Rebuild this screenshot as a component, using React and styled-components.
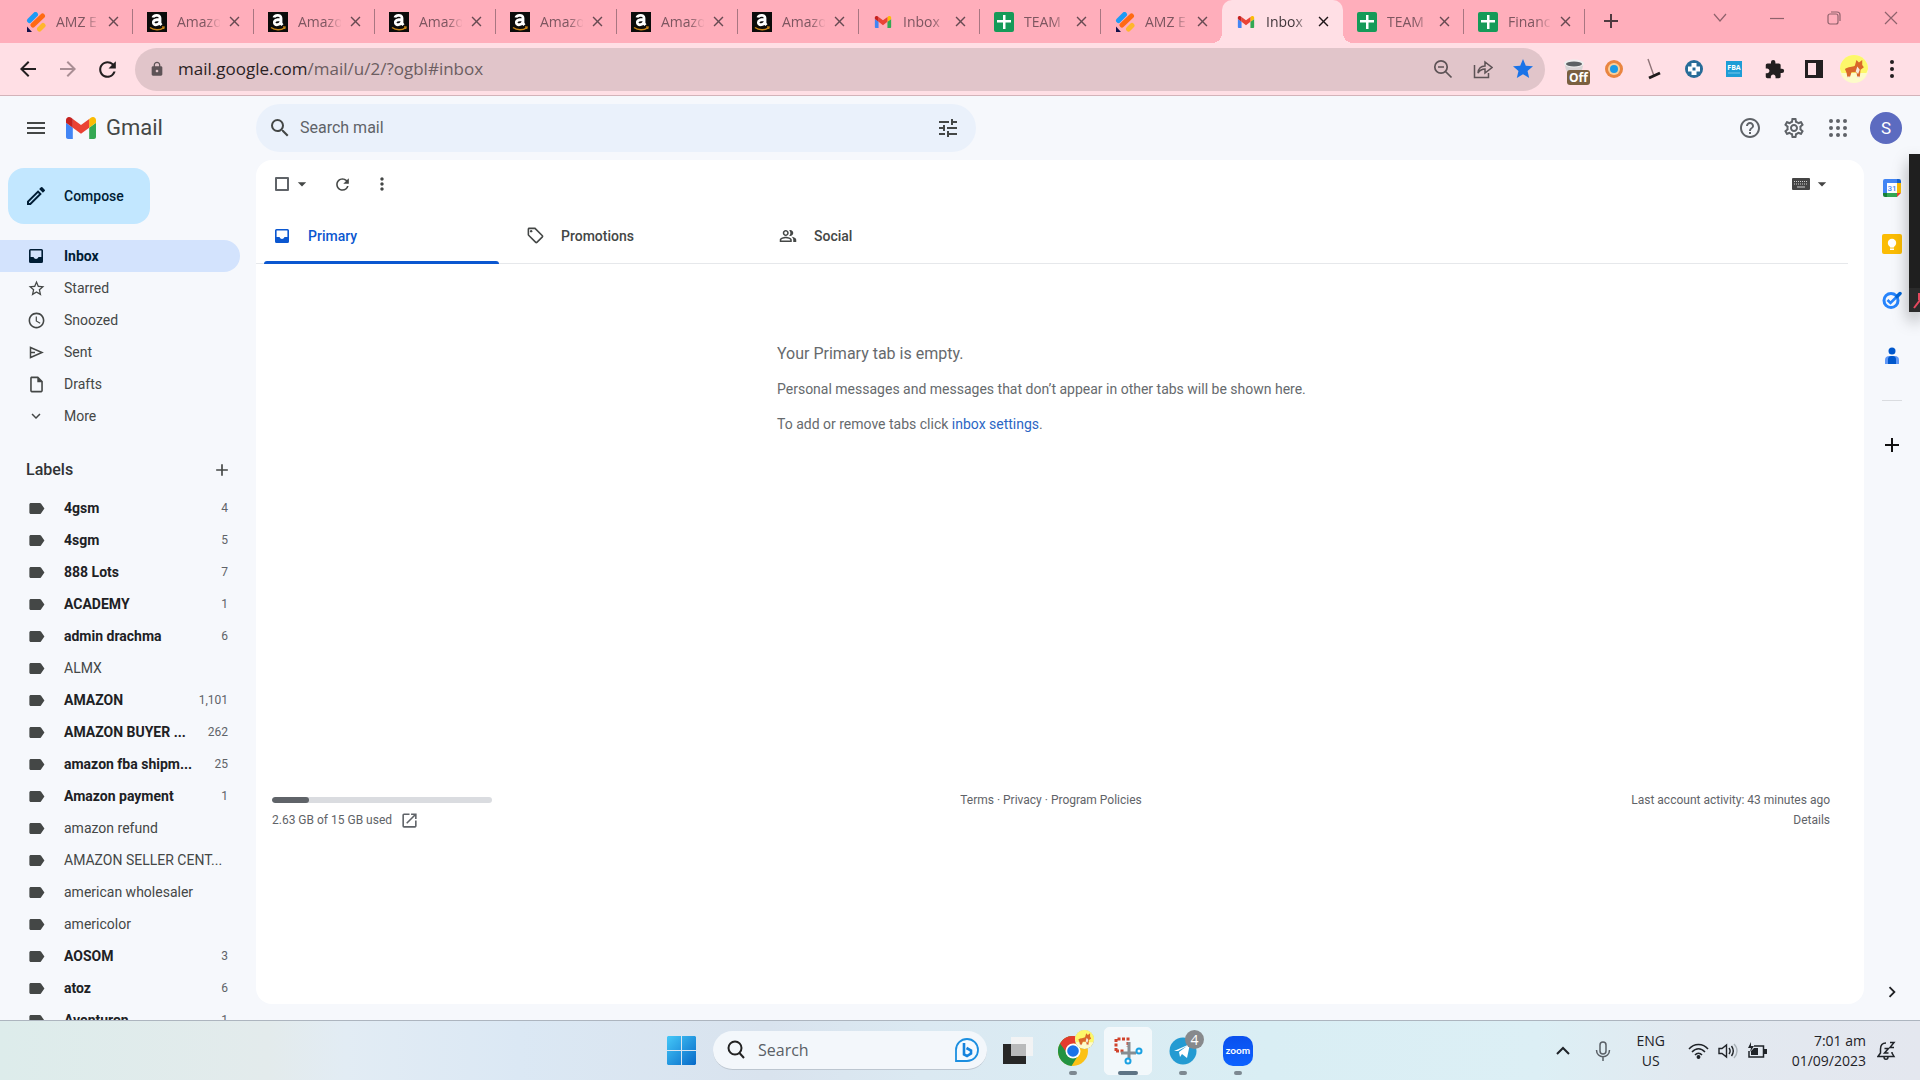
import React from "react";
import styled, { createGlobalStyle, css } from "styled-components";
import {
  MdStarBorder, MdAccessTime, MdOutlineInsertDriveFile, MdOutlinePeopleAlt,
  MdExpandMore, MdLabel, MdAdd, MdMenu, MdSearch, MdTune, MdHelpOutline,
  MdOutlineSettings, MdRefresh, MdMoreVert, MdArrowDropDown,
  MdOutlineLocalOffer, MdOpenInNew, MdLock, MdStar,
  MdExtension, MdArrowBack, MdArrowForward, MdOutlineModeEdit, MdClose,
  MdChevronRight,
} from "react-icons/md";

const chromeFont = '"Open Sans", "Noto Sans", sans-serif';
const mailFont = 'Roboto, "Liberation Sans", sans-serif';

const GlobalStyle = createGlobalStyle`
  *, *::before, *::after { box-sizing: border-box; }
  body { margin: 0; font-family: ${mailFont}; color: #444746; overflow: hidden; }
  button, input { font: inherit; color: inherit; }
  a { color: inherit; text-decoration: none; }
  svg { display: block; flex: none; }
`;

const Screen = styled.div`
  height: 100vh;
  display: flex;
  flex-direction: column;
`;

const PlainButton = styled.button`
  display: flex;
  align-items: center;
  justify-content: center;
  flex: none;
  border: 0;
  padding: 0;
  background: none;
  width: ${(p) => p.$w || 24}px;
  height: ${(p) => p.$h || p.$w || 24}px;
  color: ${(p) => p.$color || "inherit"};
`;

/* ---------- browser ---------- */

const TabStrip = styled.div`
  display: flex;
  align-items: stretch;
  height: 43px;
  flex: none;
  padding-left: 12px;
  background: #ffaebb;
  font-family: ${chromeFont};
`;

const BrowserTab = styled.div`
  position: relative;
  display: flex;
  align-items: center;
  width: 121px;
  flex: 0 1 121px;
  padding-left: 14px;
  color: #7d5660;
  ${(p) => p.$active && css`
    background: #ffdfe5;
    border-radius: 10px 10px 0 0;
    color: #41363a;
    &::before, &::after {
      content: "";
      position: absolute;
      bottom: 0;
      width: 10px;
      height: 10px;
    }
    &::before { left: -10px; background: radial-gradient(circle at 0 0, #ffaebb 10px, #ffdfe5 10px); }
    &::after { right: -10px; background: radial-gradient(circle at 100% 0, #ffaebb 10px, #ffdfe5 10px); }
  `}
`;

const TabTitle = styled.span`
  width: 43px;
  margin-left: 10px;
  overflow: hidden;
  white-space: nowrap;
  font-size: 14px;
  line-height: 20px;
  mask-image: linear-gradient(90deg, #000 28px, transparent 44px);
`;

const TabClose = styled(PlainButton)`
  margin-left: 6px;
  width: 16px;
  color: ${(p) => (p.$active ? "#1f1518" : "#674a52")};
`;

const TabRule = styled.span`
  width: 1px;
  height: 25px;
  margin-left: auto;
  background: ${(p) => (p.$hidden ? "transparent" : "#a87681")};
`;

const NewTab = styled(PlainButton)`
  margin: 9px 0 0 14px;
  color: #4f3a40;
`;

const WindowControls = styled.div`
  display: flex;
  gap: 33px;
  margin: 6px 17px 0 auto;
  color: #8f626c;
`;

const AddressRow = styled.div`
  display: flex;
  align-items: center;
  flex: none;
  height: 53px;
  padding: 0 16px 0 14px;
  border-bottom: 1px solid #d3b3b9;
  background: #ffdfe5;
  color: #231f20;
  font-family: ${chromeFont};
`;

const NavButtons = styled.div`
  display: flex;
  gap: 13px;
  width: 121px;
  flex: none;
`;

const Omnibox = styled.div`
  display: flex;
  align-items: center;
  flex: 1;
  height: 43px;
  padding: 0 10px 0 14px;
  border-radius: 22px;
  background: #e1c5ca;
  color: #5d5356;
`;

const Address = styled.div`
  flex: 1;
  margin-left: 13px;
  font-size: 17px;
  line-height: 24px;
  color: #6b5d61;
  b { font-weight: 400; color: #2a2224; }
`;

const OmniActions = styled.div`
  display: flex;
  gap: 16px;
`;

const Extensions = styled.div`
  display: flex;
  align-items: center;
  gap: 12px;
  margin-left: 15px;
`;

const ExtSlot = styled(PlainButton)`
  position: relative;
  width: 28px;
  height: 34px;
`;

const OffBadge = styled.span`
  position: absolute;
  left: 7px;
  top: 18px;
  padding: 0 2px;
  border-radius: 3px;
  background: #7a6040;
  color: #fff;
  font-size: 12px;
  font-weight: 700;
  line-height: 15px;
`;

const ProfilePic = styled(PlainButton)`
  width: 28px;
  height: 34px;
`;

/* ---------- mail ---------- */

const Mail = styled.div`
  display: flex;
  flex-direction: column;
  flex: 1;
  min-height: 0;
  background: #f6f8fc;
  position: relative;
`;

const MailHeader = styled.header`
  display: flex;
  align-items: center;
  height: 64px;
  flex: none;
  padding-right: 18px;
`;

const Brand = styled.div`
  display: flex;
  align-items: center;
  width: 256px;
  flex: none;
  padding-left: 24px;
`;

const BrandLink = styled.a`
  display: flex;
  align-items: center;
  gap: 10px;
  margin-left: 18px;
  font-size: 22px;
  line-height: 28px;
  color: #444746;
`;

const SearchForm = styled.form`
  display: flex;
  align-items: center;
  width: 720px;
  height: 48px;
  padding: 0 16px 0 12px;
  border-radius: 24px;
  background: #eaf1fb;
  input {
    flex: 1;
    min-width: 0;
    margin-left: 8px;
    padding: 0;
    border: 0;
    background: none;
    outline: 0;
    font-size: 16px;
    line-height: 24px;
  }
  input::placeholder { color: #5f6368; opacity: 1; }
`;

const HeaderActions = styled.div`
  display: flex;
  align-items: center;
  gap: 20px;
  margin-left: auto;
  color: #5f6368;
`;

const Avatar = styled(PlainButton)`
  border-radius: 50%;
  background: #5c6bc0;
  color: #fff;
  font-size: 17px;
`;

const Body = styled.div`
  display: flex;
  flex: 1;
  min-height: 0;
`;

const Sidebar = styled.aside`
  width: 256px;
  flex: none;
  overflow: hidden;
  padding-top: 8px;
`;

const Compose = styled.button`
  display: flex;
  align-items: center;
  gap: 16px;
  width: 142px;
  height: 56px;
  margin: 0 0 16px 8px;
  padding: 0 0 0 16px;
  border: 0;
  border-radius: 16px;
  background: #c2e7ff;
  color: #001d35;
  font-size: 14px;
  font-weight: 500;
`;

const NavRow = styled.a`
  display: flex;
  align-items: center;
  height: 32px;
  width: 240px;
  padding: 0 12px 0 26px;
  border-radius: 0 16px 16px 0;
  font-size: 14px;
  line-height: 20px;
  color: ${(p) => (p.$active ? "#001d35" : p.$unread ? "#202124" : "#444746")};
  background: ${(p) => (p.$active ? "#d3e3fd" : "transparent")};
  font-weight: ${(p) => (p.$active || p.$unread ? 700 : 400)};
`;

const RowText = styled.span`
  flex: 1;
  margin-left: 18px;
  white-space: nowrap;
`;

const Count = styled.span`
  font-size: 12px;
  font-weight: 400;
  color: #5f6368;
`;

const LabelsHead = styled.div`
  display: flex;
  align-items: center;
  justify-content: space-between;
  width: 240px;
  height: 60px;
  margin: 8px 0 -8px;
  padding: 0 8px 0 26px;
  h2 {
    margin: 0;
    font-size: 16px;
    font-weight: 500;
    line-height: 20px;
    color: #303336;
  }
`;

const Card = styled.main`
  display: flex;
  flex-direction: column;
  flex: 1;
  min-width: 0;
  margin-bottom: 16px;
  border-radius: 16px;
  background: #fff;
`;

const Toolbar = styled.div`
  display: flex;
  align-items: center;
  height: 48px;
  flex: none;
  padding: 0 32px 0 19px;
`;

const Check = styled.input`
  appearance: none;
  width: 14px;
  height: 14px;
  margin: 0 8px 0 0;
  border: 2px solid #5f6368;
  border-radius: 1px;
`;

const SelectGroup = styled.div`
  display: flex;
  align-items: center;
  width: 59px;
`;

const InputTools = styled.div`
  display: flex;
  align-items: center;
  gap: 1px;
  margin-left: auto;
  color: #444;
`;

const CategoryTabs = styled.nav`
  display: flex;
  height: 56px;
  flex: none;
  margin-right: 16px;
  padding-left: 8px;
  border-bottom: 1px solid #e6e8eb;
`;

const Category = styled.a`
  position: relative;
  display: flex;
  align-items: center;
  gap: 16px;
  width: 253px;
  padding-left: 8px;
  font-size: 14px;
  font-weight: 500;
  color: ${(p) => (p.$active ? "#0b57d0" : "#444746")};
  ${(p) => p.$active && css`
    &::after {
      content: "";
      position: absolute;
      left: 0;
      right: 18px;
      bottom: -1px;
      height: 3px;
      border-radius: 3px 3px 0 0;
      background: #0b57d0;
    }
  `}
`;

const EmptyArea = styled.section`
  display: flex;
  justify-content: center;
  flex: none;
  padding: 78px 16px 0 0;
`;

const EmptyText = styled.div`
  width: 550px;
  color: #666a6d;
  p { margin: 0 0 15px; font-size: 14px; line-height: 20px; }
  h3 { margin: 0 0 13px; font-size: 16px; font-weight: 400; line-height: 24px; }
  a { color: #2b66c4; }
`;

const MailFooter = styled.footer`
  display: grid;
  grid-template-columns: 1fr auto 1fr;
  margin: 341px 34px 0 16px;
  font-size: 12px;
  line-height: 20px;
  color: #5f6368;
`;

const Meter = styled.div`
  width: 220px;
  height: 6px;
  margin: 7px 0;
  border-radius: 3px;
  background: #dadce0;
  overflow: hidden;
  div { height: 6px; border-radius: 3px; background: #5f6368; }
`;

const Usage = styled.div`
  display: flex;
  align-items: center;
  gap: 8px;
`;

const Activity = styled.div`
  text-align: right;
`;

const SidePanel = styled.aside`
  display: flex;
  flex-direction: column;
  align-items: center;
  width: 56px;
  flex: none;
  padding: 16px 0;
`;

const PanelButton = styled(PlainButton)`
  width: 24px;
  height: 24px;
  margin-bottom: 32px;
`;

const PanelRule = styled.hr`
  width: 20px;
  height: 1px;
  margin: 0 0 32px;
  border: 0;
  background: #dadce0;
`;

const PanelToggle = styled(PlainButton)`
  margin-top: auto;
  color: #202124;
`;

const VideoDock = styled.div`
  position: absolute;
  right: 0;
  top: 58px;
  width: 11px;
  height: 158px;
  background: #1f1f1f;
  box-shadow: 0 8px 16px rgba(0, 0, 0, 0.35);
  display: flex;
  flex-direction: column;
  justify-content: flex-end;
`;

/* ---------- taskbar ---------- */

const Taskbar = styled.footer`
  display: grid;
  grid-template-columns: 1fr auto 1fr;
  align-items: center;
  height: 60px;
  flex: none;
  border-top: 1px solid #adb5bf;
  background: linear-gradient(90deg, #ddeceb 0, #e3ebec 14%, #e2ecf4 18%, #dbe8f4 27%, #d9e3ee 40%, #dbe9f2 48%, #d9eef4 66%, #dceff5 80%, #e2e9f0 88%, #e4e7ef 100%);
  font-family: ${chromeFont};
  color: #1f2328;
`;

const Dock = styled.div`
  grid-column: 2;
  display: flex;
  align-items: center;
  gap: 7px;
`;

const TaskSearch = styled.label`
  display: flex;
  align-items: center;
  width: 274px;
  height: 39px;
  padding: 0 7px 0 13px;
  border-radius: 20px;
  border-bottom: 1px solid #bcc6d0;
  background: #f3f7fb;
  input {
    flex: 1;
    min-width: 0;
    margin-left: 12px;
    padding: 0;
    border: 0;
    background: none;
    outline: 0;
    font-size: 16px;
  }
  input::placeholder { color: #5a5f66; opacity: 1; }
`;

const TaskTile = styled.button`
  position: relative;
  display: flex;
  align-items: center;
  justify-content: center;
  width: 48px;
  height: 48px;
  padding: 0;
  border: 1px solid ${(p) => (p.$active ? "#f4f8fb" : "transparent")};
  border-radius: 5px;
  background: ${(p) => (p.$active ? "rgba(255,255,255,.65)" : "none")};
  &::after {
    content: "";
    display: ${(p) => (p.$running ? "block" : "none")};
    position: absolute;
    bottom: -1px;
    width: ${(p) => (p.$active ? 20 : 8)}px;
    height: 4px;
    border-radius: 2px;
    background: ${(p) => (p.$active ? "#5e7485" : "#7d8891")};
  }
`;

const TileBadge = styled.span`
  position: absolute;
  right: 2px;
  top: 2px;
  width: 19px;
  height: 19px;
  border-radius: 50%;
  background: #87898c;
  color: #fff;
  font-size: 14px;
  line-height: 19px;
  text-align: center;
`;

const ZoomTile = styled.span`
  width: 30px;
  height: 30px;
  border-radius: 10px;
  background: linear-gradient(#0a50ee, #0d62ff);
  color: #fff;
  font-family: Lato, sans-serif;
  font-size: 10px;
  font-weight: 700;
  line-height: 28px;
  text-align: center;
`;

const Tray = styled.div`
  grid-column: 3;
  display: flex;
  align-items: center;
  justify-content: flex-end;
  padding-right: 24px;
  font-size: 14px;
  line-height: 20px;
`;

const Lang = styled.div`
  width: 30px;
  margin: 0 22px 0 5px;
  text-align: center;
`;

const Status = styled.div`
  display: flex;
  gap: 9px;
  margin-right: 25px;
`;

const Clock = styled.div`
  margin-right: 10px;
  text-align: right;
`;

/* ---------- drawings ---------- */

const GmailMark = ({ w, h }) => (
  <svg width={w} height={h} viewBox="52 42 88 66" preserveAspectRatio="none">
    <path fill="#4285f4" d="M58 108h14V74L52 59v43c0 3.32 2.69 6 6 6" />
    <path fill="#34a853" d="M120 108h14c3.32 0 6-2.69 6-6V59l-20 15" />
    <path fill="#fbbc04" d="M120 48v26l20-15v-8c0-7.42-8.47-11.65-14.4-7.2" />
    <path fill="#ea4335" d="M72 74V48l24 18 24-18v26L96 92" />
    <path fill="#c5221f" d="M52 51v8l20 15V48l-5.6-4.2c-5.94-4.45-14.4-.22-14.4 7.2" />
  </svg>
);

const AmzIcon = () => (
  <svg width="20" height="20" viewBox="0 0 20 20" strokeLinecap="round" fill="none">
    <path d="M3.5 8.5 9.5 2.5" stroke="#1e9bf5" strokeWidth="5" />
    <path d="M7 13 16.5 4" stroke="#ff6a13" strokeWidth="5" />
    <path d="M13.5 17 17 13.5" stroke="#ffb62b" strokeWidth="5" />
    <path d="M1 14.5 6 20H1z" fill="#12104a" />
  </svg>
);

const AmazonIcon = () => (
  <svg width="20" height="20" viewBox="0 0 20 20" fill="none">
    <rect width="20" height="20" fill="#0b0b0b" />
    <path d="M6 5.6C6.5 3 13 2 13 6v5.500l1.400 1.700M12.500 7.500C8.500 7.500 6 8.500 6.400 11c.6 2.600 5.600 2.200 6.400-1" stroke="#fff" strokeWidth="2.800" />
    <path d="M3 15.500c4 3 10 3 13.500.3M15 15l2 .2-.5 1.800" stroke="#c98518" strokeWidth="1.500" />
  </svg>
);

const SheetIcon = () => (
  <svg width="20" height="20" viewBox="0 0 20 20">
    <rect width="20" height="20" rx="2" fill="#159a58" />
    <path d="M9 3h2.500v5H17v2.500h-5.500V17H9v-6.500H3V8h6z" fill="#fff" />
  </svg>
);

const InboxIcon = () => (
  <svg width="14" height="14" fill="currentColor">
    <path fillRule="evenodd" d="M1.500 0h11A1.500 1.500 0 0 1 14 1.500v11a1.500 1.500 0 0 1-1.500 1.500h-11A1.500 1.500 0 0 1 0 12.500v-11A1.500 1.500 0 0 1 1.500 0zM1.600 1.600V8H4.500C5 9.300 6 10 7 10s2-.7 2.500-2h2.900V1.600z" />
  </svg>
);

const SendIcon = () => (
  <svg width="15" height="13" fill="none" stroke="currentColor" strokeWidth="1.500">
    <path d="M1.500 1.500 13 6.500 1.500 11.500zM1.500 6.500H6" />
  </svg>
);

const KeyboardIcon = () => (
  <svg width="18" height="12">
    <rect width="18" height="12" rx="1" fill="#444" />
    <path d="M2 3.500h14M2 6h14" stroke="#d0d0d0" strokeDasharray="1 1" />
    <path d="M5 9h8" stroke="#d0d0d0" />
  </svg>
);

const favicons = {
  amz: <AmzIcon />,
  amazon: <AmazonIcon />,
  gmail: (
    <svg width="20" height="20" viewBox="42 31 108 88">
      <path fill="#4285f4" d="M58 108h14V74L52 59v43c0 3.32 2.69 6 6 6" />
      <path fill="#34a853" d="M120 108h14c3.32 0 6-2.69 6-6V59l-20 15" />
      <path fill="#fbbc04" d="M120 48v26l20-15v-8c0-7.42-8.47-11.65-14.4-7.2" />
      <path fill="#ea4335" d="M72 74V48l24 18 24-18v26L96 92" />
      <path fill="#c5221f" d="M52 51v8l20 15V48l-5.6-4.2c-5.94-4.45-14.4-.22-14.4 7.2" />
    </svg>
  ),
  sheet: <SheetIcon />,
};

const Corgi = ({ size }) => (
  <svg width={size} height={size} viewBox="0 0 34 34">
    <circle cx="17" cy="17" r="17" fill="#fdfbc9" />
    <path d="M0 17a17 17 0 0 1 34 0l-2 5H2z" fill="#fdf76a" />
    <path d="M6 17c4-3 9-2 12-4l2-7 3 3 4-3v6l2 3-4 3-1 9h-3l-1-6h-6l-2 6H9l-1-5z" fill="#d9682a" />
    <path d="m21 14 3 4-2 5-3-3zM9 26h3v2H9zM20 26h4v2h-4z" fill="#f5ebdc" />
  </svg>
);

const thin = { fill: "none", stroke: "currentColor", strokeWidth: 1.2 };

const tabs = [
  ["amz", "AMZ E"], ["amazon", "Amazo"], ["amazon", "Amazo"], ["amazon", "Amazo"],
  ["amazon", "Amazo"], ["amazon", "Amazo"], ["amazon", "Amazo"], ["gmail", "Inbox"],
  ["sheet", "TEAM"], ["amz", "AMZ E"], ["gmail", "Inbox"], ["sheet", "TEAM"], ["sheet", "Financ"],
];
const activeTab = 10;

const folders = [
  ["Inbox", InboxIcon], ["Starred", MdStarBorder, 19], ["Snoozed", MdAccessTime, 19],
  ["Sent", SendIcon], ["Drafts", MdOutlineInsertDriveFile, 19], ["More", MdExpandMore, 18],
];

const labels = [
  ["4gsm", "4"], ["4sgm", "5"], ["888 Lots", "7"], ["ACADEMY", "1"], ["admin drachma", "6"],
  ["ALMX"], ["AMAZON", "1,101"], ["AMAZON BUYER ...", "262"], ["amazon fba shipm...", "25"],
  ["Amazon payment", "1"], ["amazon refund"], ["AMAZON SELLER CENT..."],
  ["american wholesaler"], ["americolor"], ["AOSOM", "3"], ["atoz", "6"], ["Aventuron", "1"],
];

const IconBox = styled.span`
  display: flex;
  justify-content: center;
  width: 20px;
  flex: none;
`;

function Browser() {
  return (
    <>
      <TabStrip>
        {tabs.map(([icon, title], i) => (
          <BrowserTab key={i} $active={i === activeTab}>
            {favicons[icon]}
            <TabTitle>{title}</TabTitle>
            <TabClose $active={i === activeTab} aria-label="Close tab"><MdClose size={17} /></TabClose>
            <TabRule $hidden={i === activeTab || i === activeTab - 1} />
          </BrowserTab>
        ))}
        <NewTab aria-label="New tab"><MdAdd size={24} /></NewTab>
        <WindowControls>
          <PlainButton aria-label="Search tabs"><svg width="14" height="14" {...thin}><path d="m1 3 6 7 6-7" /></svg></PlainButton>
          <PlainButton aria-label="Minimize"><svg width="14" height="14" {...thin}><path d="M0 7.5h14" /></svg></PlainButton>
          <PlainButton aria-label="Restore"><svg width="14" height="14" {...thin}><rect x="1" y="3" width="10" height="10" rx="2" /><path d="M4 1h6a3 3 0 0 1 3 3v6" /></svg></PlainButton>
          <PlainButton aria-label="Close"><svg width="14" height="14" {...thin}><path d="m1 1 12 12M13 1 1 13" /></svg></PlainButton>
        </WindowControls>
      </TabStrip>
      <AddressRow>
        <NavButtons>
          <PlainButton $w={27} aria-label="Back"><MdArrowBack size={24} /></PlainButton>
          <PlainButton $w={27} $color="#a98e94" aria-label="Forward"><MdArrowForward size={24} /></PlainButton>
          <PlainButton $w={27} aria-label="Reload"><MdRefresh size={25} /></PlainButton>
        </NavButtons>
        <Omnibox>
          <MdLock size={16} />
          <Address><b>mail.google.com</b>/mail/u/2/?ogbl#inbox</Address>
          <OmniActions>
            <PlainButton aria-label="Zoom">
              <svg width="20" height="20" fill="none" stroke="currentColor" strokeWidth="1.7"><circle cx="8" cy="8" r="6.2" /><path d="m12.5 12.5 6 6M5 8h6" /></svg>
            </PlainButton>
            <PlainButton aria-label="Share">
              <svg width="20" height="20" fill="none" stroke="currentColor" strokeWidth="1.500"><path d="M1.5 6v12.5h14V14M5 14c.5-5 3-7 7-7V3l7 5.500-7 5.500v-4c-3 0-5 1-7 4z" /></svg>
            </PlainButton>
            <PlainButton $color="#1a73e8" aria-label="Bookmark"><MdStar size={24} /></PlainButton>
          </OmniActions>
        </Omnibox>
        <Extensions>
          <ExtSlot aria-label="Extension off">
            <svg width="22" height="22" viewBox="0 0 22 22"><path d="M2 6c0 7 3 10 9 10s9-3 9-10" fill="#d8d4d5" /><ellipse cx="11" cy="5.5" rx="10" ry="4" fill="#eee" /><ellipse cx="11" cy="6" rx="8" ry="2.5" fill="#5b6164" /></svg>
            <OffBadge>Off</OffBadge>
          </ExtSlot>
          <ExtSlot aria-label="Extension">
            <svg width="18" height="18"><circle cx="9" cy="9" r="9" fill="#e98540" /><circle cx="9" cy="9" r="6" fill="#f9cf9a" /><circle cx="9" cy="9" r="4" fill="#1c9be6" /></svg>
          </ExtSlot>
          <ExtSlot aria-label="Extension">
            <svg width="18" height="22" fill="none" stroke="#1e1b1c"><path d="m3 1 6 17" strokeWidth="1.4" stroke="#8f7478" /><path d="m4 20 11-5" strokeWidth="3" /></svg>
          </ExtSlot>
          <ExtSlot aria-label="Extension">
            <svg width="18" height="18"><circle cx="9" cy="9" r="9" fill="#276c98" /><path d="M6.5 3h5v3.500H15v5h-3.500V15h-5v-3.500H3v-5h3.500z" fill="#fff" /><path d="M7.5 7.500h3v3h-3z" fill="#276c98" /></svg>
          </ExtSlot>
          <ExtSlot aria-label="FBA">
            <svg width="16" height="16"><rect width="16" height="16" fill="#1d9dd6" /><text x="8" y="9" fontSize="7" fontWeight="700" textAnchor="middle" fill="#fff" fontFamily="Open Sans, sans-serif">FBA</text><path d="M2 12h12" stroke="#79c7ea" /></svg>
          </ExtSlot>
          <ExtSlot aria-label="Extensions"><MdExtension size={21} /></ExtSlot>
          <ExtSlot aria-label="Side panel">
            <svg width="18" height="18"><path fillRule="evenodd" d="M0 0h18v18H0zM3 3v12h8V3z" fill="currentColor" /></svg>
          </ExtSlot>
          <ProfilePic aria-label="Profile"><Corgi size={28} /></ProfilePic>
          <PlainButton aria-label="Menu">
            <svg width="6" height="20" fill="currentColor"><circle cx="3" cy="3" r="2" /><circle cx="3" cy="10" r="2" /><circle cx="3" cy="17" r="2" /></svg>
          </PlainButton>
        </Extensions>
      </AddressRow>
    </>
  );
}

function SidebarNav() {
  return (
    <Sidebar>
      <Compose><MdOutlineModeEdit size={24} />Compose</Compose>
      {folders.map(([name, Icon, size], i) => (
        <NavRow key={name} href="#" $active={i === 0}>
          <IconBox><Icon size={size} /></IconBox>
          <RowText>{name}</RowText>
        </NavRow>
      ))}
      <LabelsHead>
        <h2>Labels</h2>
        <PlainButton $w={20} aria-label="Create new label"><MdAdd size={20} /></PlainButton>
      </LabelsHead>
      {labels.map(([name, count]) => (
        <NavRow key={name} href="#" $unread={!!count}>
          <IconBox><MdLabel size={19} color="#444746" /></IconBox>
          <RowText>{name}</RowText>
          {count && <Count>{count}</Count>}
        </NavRow>
      ))}
    </Sidebar>
  );
}

function Gmail() {
  return (
    <Mail>
      <MailHeader>
        <Brand>
          <PlainButton aria-label="Main menu"><MdMenu size={24} /></PlainButton>
          <BrandLink href="#"><GmailMark w={30} h={22} />Gmail</BrandLink>
        </Brand>
        <SearchForm>
          <PlainButton type="button" aria-label="Search"><MdSearch size={24} /></PlainButton>
          <input aria-label="Search mail" placeholder="Search mail" />
          <PlainButton type="button" aria-label="Search options"><MdTune size={24} /></PlainButton>
        </SearchForm>
        <HeaderActions>
          <PlainButton aria-label="Support"><MdHelpOutline size={24} /></PlainButton>
          <PlainButton aria-label="Settings"><MdOutlineSettings size={24} /></PlainButton>
          <PlainButton aria-label="Google apps">
            <svg width="18" height="18" fill="currentColor">
              {[2, 9, 16].map((y) => [2, 9, 16].map((x) => <circle key={`${x}-${y}`} cx={x} cy={y} r="2" />))}
            </svg>
          </PlainButton>
          <Avatar $w={32} aria-label="Account">S</Avatar>
        </HeaderActions>
      </MailHeader>
      <Body>
        <SidebarNav />
        <Card>
          <Toolbar>
            <SelectGroup>
              <Check type="checkbox" aria-label="Select" />
              <PlainButton $w={10} aria-label="Select options"><MdArrowDropDown size={20} /></PlainButton>
            </SelectGroup>
            <PlainButton $w={16} aria-label="Refresh"><MdRefresh size={19} /></PlainButton>
            <PlainButton $w={64} $h={20} aria-label="More"><MdMoreVert size={20} /></PlainButton>
            <InputTools>
              <PlainButton $w={20} aria-label="Input tools"><KeyboardIcon /></PlainButton>
              <PlainButton $w={20} aria-label="Choose input tool"><MdArrowDropDown size={20} /></PlainButton>
            </InputTools>
          </Toolbar>
          <CategoryTabs>
            <Category href="#" $active><IconBox><InboxIcon /></IconBox>Primary</Category>
            <Category href="#"><IconBox><MdOutlineLocalOffer size={19} /></IconBox>Promotions</Category>
            <Category href="#"><IconBox><MdOutlinePeopleAlt size={18} /></IconBox>Social</Category>
          </CategoryTabs>
          <EmptyArea>
            <EmptyText>
              <h3>Your Primary tab is empty.</h3>
              <p>Personal messages and messages that don’t appear in other tabs will be shown here.</p>
              <p>To add or remove tabs click <a href="#">inbox settings</a>.</p>
            </EmptyText>
          </EmptyArea>
          <MailFooter>
            <div>
              <Meter><div style={{ width: `${(2.63 / 15) * 97}%` }} /></Meter>
              <Usage>2.63 GB of 15 GB used <MdOpenInNew size={19} /></Usage>
            </div>
            <div><a href="#">Terms</a> · <a href="#">Privacy</a> · <a href="#">Program Policies</a></div>
            <Activity>Last account activity: 43 minutes ago<br /><a href="#">Details</a></Activity>
          </MailFooter>
        </Card>
        <SidePanel>
          <PanelButton aria-label="Calendar">
            <svg width="18" height="18" viewBox="0 0 18 18">
              <path d="M2 0h12v4H4v10H0V2a2 2 0 0 1 2-2z" fill="#4285f4" /><path d="M14 0h2a2 2 0 0 1 2 2v2h-4z" fill="#1967d2" />
              <path d="M14 4h4v10h-4z" fill="#fbbc04" /><path d="M4 14h10v4H4z" fill="#34a853" /><path d="M0 14h4v4H2a2 2 0 0 1-2-2z" fill="#188038" /><path d="M14 14h4l-4 4z" fill="#ea4335" />
              <path d="M4 4h10v10H4z" fill="#fff" /><text x="9" y="12" textAnchor="middle" fontSize="8" fontWeight="500" fontFamily="Roboto, sans-serif" fill="#4285f4">31</text>
            </svg>
          </PanelButton>
          <PanelButton aria-label="Keep">
            <svg width="20" height="20"><rect width="20" height="20" rx="2" fill="#fbbc04" /><circle cx="10" cy="9" r="4.2" fill="#fff" /><path d="M8 12h4v1.500H8zM8 14.500h4V16H8z" fill="#fff" /></svg>
          </PanelButton>
          <PanelButton aria-label="Tasks">
            <svg width="20" height="18" viewBox="0 0 20 18" fill="none"><circle cx="9" cy="9.5" r="7" stroke="#2684fc" strokeWidth="3" /><path d="m5.5 9 3 3L15 5.500" stroke="#2684fc" strokeWidth="2.6" /><path d="m15 5.500 3-3" stroke="#0066da" strokeWidth="3.5" strokeLinecap="round" /></svg>
          </PanelButton>
          <PanelButton aria-label="Contacts">
            <svg width="14" height="18"><circle cx="7" cy="4" r="3.5" fill="#0057cc" /><path d="M0 17v-4c0-3 2-4 4-4h6c2 0 4 1 4 4v4z" fill="#5e97f6" /><path d="M3 17v-4c0-3 1-4 4-4s4 1 4 4v4z" fill="#0057cc" /></svg>
          </PanelButton>
          <PanelRule />
          <PanelButton aria-label="Get add-ons" $color="#111"><MdAdd size={24} /></PanelButton>
          <PanelToggle aria-label="Hide side panel"><MdChevronRight size={22} /></PanelToggle>
        </SidePanel>
      </Body>
      <VideoDock>
        <svg width="11" height="24"><rect width="11" height="24" fill="#2b2b2b" /><path d="M5 20 11 12M10 5v7" stroke="#e5485d" strokeWidth="2" /></svg>
      </VideoDock>
    </Mail>
  );
}

function WindowsTaskbar() {
  return (
    <Taskbar>
      <Dock>
        <TaskTile aria-label="Start">
          <svg width="30" height="30"><defs><linearGradient id="win" x2="1" y2="1"><stop stopColor="#45c8f8" /><stop offset="1" stopColor="#0669c8" /></linearGradient></defs><path fill="url(#win)" d="M1 0h13v14H0V1zM15 0h13l1 1v13H15zM0 15h14v14H1l-1-1zM15 15h14v13l-1 1H15z" /></svg>
        </TaskTile>
        <TaskSearch>
          <svg width="20" height="20" fill="none" stroke="#222" strokeWidth="2"><circle cx="9" cy="8" r="6.5" /><path d="m13.5 13 4.500 5" /></svg>
          <input aria-label="Search" placeholder="Search" />
          <svg width="26" height="26" viewBox="0 0 26 26" fill="none"><path d="M2 24V13A11 11 0 1 1 13 24z" stroke="#1c8fe0" strokeWidth="1.8" fill="#f5faff" /><path d="M10 6v11.500l3 1.500 4-2.500v-3L12.500 11" stroke="#1583dd" strokeWidth="2.6" /></svg>
        </TaskSearch>
        <TaskTile aria-label="Task view">
          <svg width="30" height="30"><rect x="0" y="8" width="23" height="20" fill="#272727" /><rect x="8" y="1" width="22" height="19" fill="#f4f4f4" opacity=".9" /><rect x="8" y="8" width="15" height="12" fill="#b9babb" /></svg>
        </TaskTile>
        <TaskTile $running aria-label="Chrome">
          <svg width="30" height="30" viewBox="0 0 30 30"><circle cx="15" cy="15" r="15" fill="#fbc116" /><path d="M15 0a15 15 0 0 0-13 7.500A15 15 0 0 0 13.500 30L21 18l-6-3z" fill="#229342" /><path d="M2 7.500A15 15 0 0 1 28 7.500H15L9 17z" fill="#e33b2e" /><circle cx="15" cy="15" r="7.5" fill="#fff" /><circle cx="15" cy="15" r="5.8" fill="#1a73e8" /></svg>
          <TileBadge><Corgi size={19} /></TileBadge>
        </TaskTile>
        <TaskTile $running $active aria-label="Snipping Tool">
          <svg width="30" height="30" fill="none"><path d="M3 15V3h12v8" stroke="#d0432c" strokeWidth="3" strokeDasharray="3 1.5" /><path d="M3 15h8" stroke="#d0432c" strokeWidth="3" strokeDasharray="3 1.5" /><path d="M16 6v16M8 17h15" stroke="#878d92" strokeWidth="3" /><circle cx="15" cy="25" r="2.5" stroke="#1ba1e2" strokeWidth="2" /><circle cx="26" cy="15" r="2.5" stroke="#1ba1e2" strokeWidth="2" /></svg>
        </TaskTile>
        <TaskTile $running aria-label="Telegram">
          <svg width="28" height="28"><circle cx="14" cy="14" r="13.5" fill="#249bd2" /><path d="m5 14 16-7-3 14-5-4-2 3-1-5 8-6-9 5z" fill="#fff" /></svg>
          <TileBadge>4</TileBadge>
        </TaskTile>
        <TaskTile $running aria-label="Zoom"><ZoomTile>zoom</ZoomTile></TaskTile>
      </Dock>
      <Tray>
        <PlainButton aria-label="Show hidden icons"><svg width="14" height="9" fill="none" stroke="currentColor" strokeWidth="2"><path d="m1 8 6-6 6 6" /></svg></PlainButton>
        <PlainButton $w={56} $h={24} aria-label="Microphone"><svg width="16" height="20" fill="none" stroke="#5a6067" strokeWidth="1.5"><rect x="5" y="1" width="6" height="12" rx="3" /><path d="M1.500 9c0 9 13 9 13 0M8 16v4" /></svg></PlainButton>
        <Lang>ENG US</Lang>
        <Status>
          <svg width="21" height="18" fill="none" stroke="currentColor" strokeWidth="1.5"><path d="M1 7c5-6 14-6 19 0M4 10c4-4.500 9-4.500 13 0M7 13c2-2.500 5-2.500 7 0" /><circle cx="10.5" cy="15" r="1.2" fill="currentColor" /></svg>
          <svg width="20" height="18" fill="none" stroke="currentColor" strokeWidth="1.4"><path d="M1 6.500h3L8.500 3v12L4 11.500H1zM11 6c1.500 2 1.500 4 0 6M13.500 4c2.500 3.500 2.500 6.500 0 10" /><path d="M16 2c4 4 4 10 0 14" stroke="#aab2b8" /></svg>
          <svg width="20" height="18" fill="none" stroke="currentColor" strokeWidth="1.5"><path d="M7 4h9.500v11H2V9" /><path d="M4 13V9l3-3h4v7zM4 0 1 6h3l-1 4 4-6H4zM17 7h3v5h-3z" fill="currentColor" stroke="none" /></svg>
        </Status>
        <Clock>7:01 am<br />01/09/2023</Clock>
        <PlainButton $w={20} aria-label="Notifications"><svg width="19" height="20" fill="none" stroke="currentColor" strokeWidth="1.5"><path d="M9 2C5 2 3.500 4.500 3.500 8v4L1 15.500h16L15 12v-1M7 16c0 3 4 3 4 0M7.500 7.500h4l-4 4.500h4M13 1.500h4l-4 5h4" /></svg></PlainButton>
      </Tray>
    </Taskbar>
  );
}

export default function App() {
  return (
    <>
      <GlobalStyle />
      <Screen>
        <Browser />
        <Gmail />
        <WindowsTaskbar />
      </Screen>
    </>
  );
}
